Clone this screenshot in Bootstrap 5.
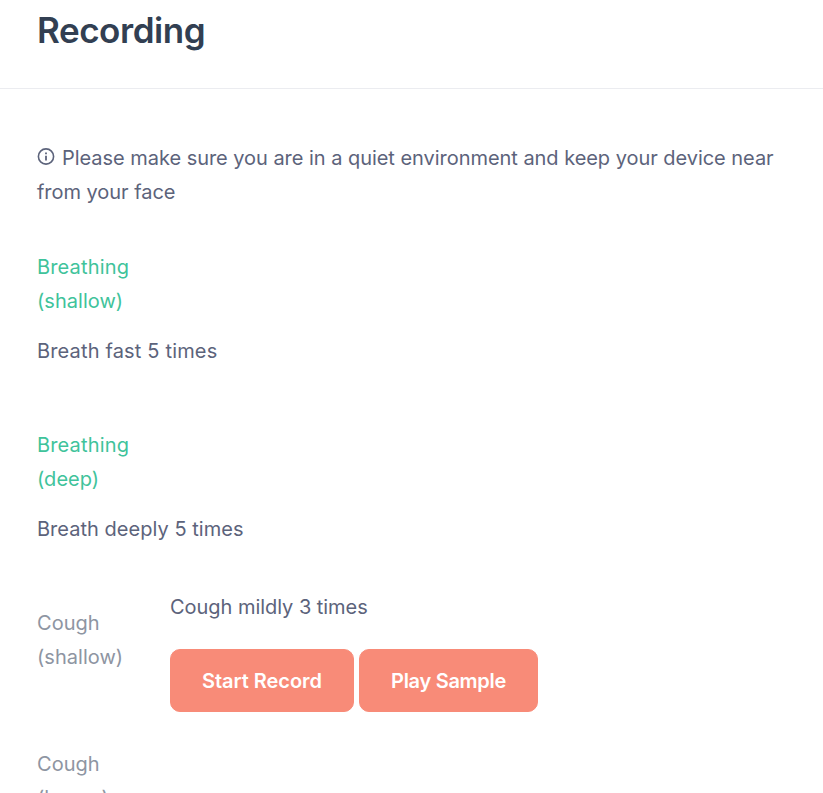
<!DOCTYPE html>
<html lang="en"><head><meta charset="utf-8"><title>Recording</title>
<meta name="viewport" content="width=device-width, initial-scale=1">
<link href="https://cdn.jsdelivr.net/npm/bootstrap@5.3.0/dist/css/bootstrap.min.css" rel="stylesheet">
<style>
html,body{height:100%;overflow:hidden}
body{font-family:Inter,"Open Sans",sans-serif;font-size:20px;line-height:34px;letter-spacing:-.04px;color:#5c637b;background:#fff}
.page-head{height:89px;padding:6px 37px 0;border-bottom:1px solid #ebecf0}
.page-head h1{font-size:35px;line-height:48px;font-weight:600;letter-spacing:-.45px;color:#323f52}
.content-area{padding:52px 37px 0}
.info-icon{width:18px;height:18px;margin-right:7px;vertical-align:-1px}
.step-row{margin-top:41px}
.step-row + .step-row{margin-top:60px}
.step-done{color:#3fc39b}
.step-todo{color:#8e95a2}
.step-name{width:133px}
.step-active{margin-top:44px}
.step-active .step-name{padding-top:16px}
.step-next{margin-top:35px}
.actions{gap:5px;margin-top:25px}
.btn-coral{--bs-btn-color:#fff;--bs-btn-bg:#f88b78;--bs-btn-border-color:#f88b78;--bs-btn-hover-bg:#f77a65;--bs-btn-hover-border-color:#f77a65;--bs-btn-hover-color:#fff;height:63px;border-radius:10px;font-size:20px;font-weight:600;letter-spacing:-.05px;padding:0;white-space:nowrap}
.btn-start{width:184px}
.btn-play{width:179px;letter-spacing:-.3px}
.ls-wide{letter-spacing:.16px}
.ls-mid{letter-spacing:.03px}
</style></head><body>
<header class="page-head"><h1 class="m-0">Recording</h1></header>
<main class="content-area">
<p class="mb-0 text-nowrap"><svg class="info-icon" viewBox="0 0 18 18" fill="none" stroke="currentColor" aria-hidden="true"><circle cx="9" cy="8.5" r="7.6" stroke-width="1.6"/><path d="M9 7.8v4.6M9 4.5v1.8" stroke-width="1.8"/></svg>Please make sure you are in a quiet environment and keep your device near<br>from your face</p>
<section class="step-row">
<p class="step-done mb-3"><span class="ls-wide">Breathing</span><br><span class="ls-mid">(shallow)</span></p>
<p class="mb-0 ls-wide">Breath fast 5 times</p>
</section>
<section class="step-row">
<p class="step-done mb-3"><span class="ls-wide">Breathing</span><br><span class="ls-mid">(deep)</span></p>
<p class="mb-0 ls-mid">Breath deeply 5 times</p>
</section>
<section class="step-active d-flex">
<div class="step-name step-todo flex-shrink-0 ls-mid">Cough<br>(shallow)</div>
<div>
<p class="mb-0">Cough mildly 3 times</p>
<div class="actions d-flex">
<button type="button" class="btn btn-coral btn-start">Start Record</button>
<button type="button" class="btn btn-coral btn-play">Play Sample</button>
</div>
</div>
</section>
<section class="step-next step-todo ls-mid">Cough<br>(heavy)</section>
</main>
<script src="https://cdn.jsdelivr.net/npm/bootstrap@5.3.0/dist/js/bootstrap.bundle.min.js"></script>
</body></html>
